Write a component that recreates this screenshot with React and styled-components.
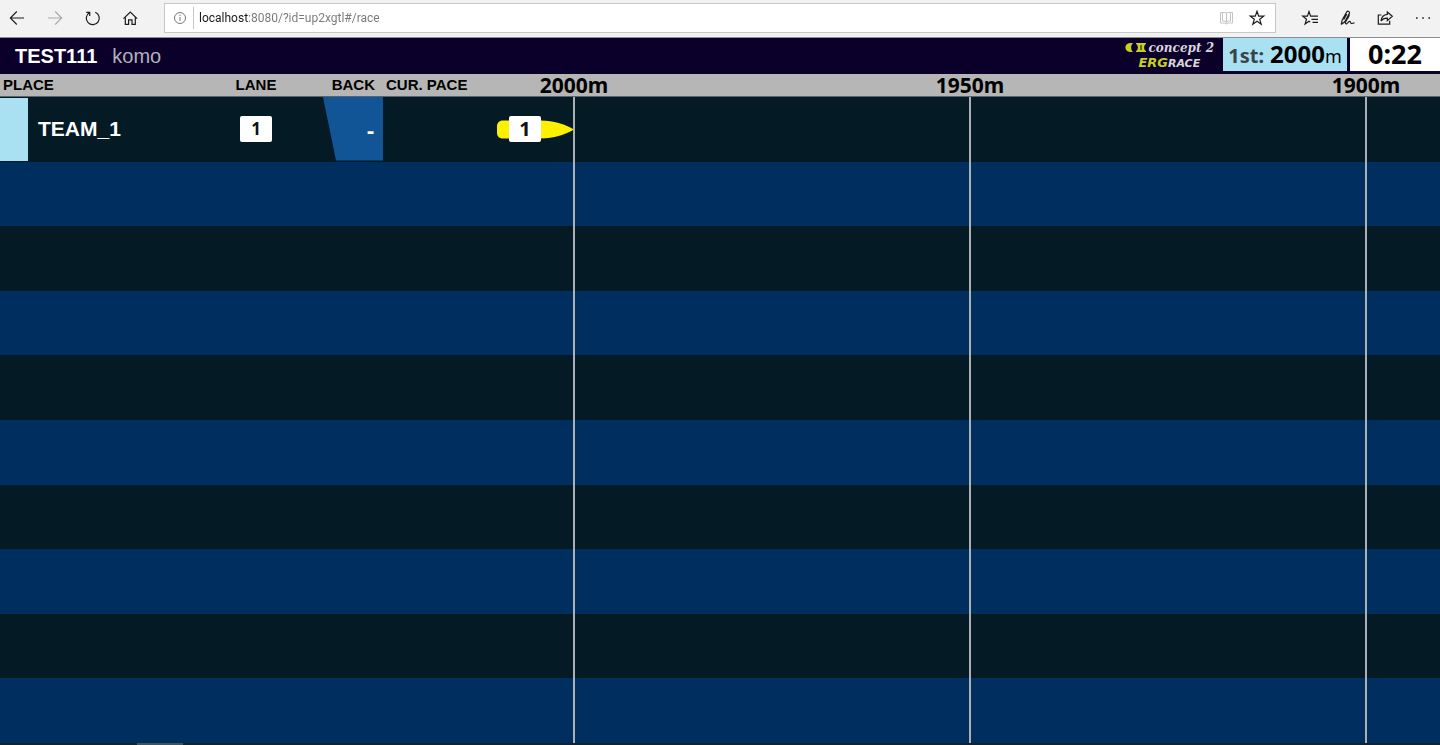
import styled, { createGlobalStyle } from 'styled-components';

const GlobalStyle = createGlobalStyle`
* {
    box-sizing: border-box;
}
body {
    margin: 0;
    background: #041b26;
    font-family: "Liberation Sans", Arial, sans-serif;
}
`

const Page = styled.div`
display: flex;
flex-direction: column;
height: 100vh;
overflow: hidden;
`

/* browser toolbar */

const Toolbar = styled.nav`
display: flex;
align-items: center;
gap: 24px;
height: 38px;
padding: 0 8px 2px;
background: #f2f2f2;
border-bottom: 1px solid #8f8c98;
`

const ToolGroup = styled.div`
display: flex;
gap: 20px;
`

const IconButton = styled.button`
display: flex;
align-items: center;
justify-content: center;
width: 18px;
height: 18px;
padding: 0;
border: 0;
background: none;
color: ${({ $color }) => $color || '#1c1c1c'};
`

const Address = styled.label`
flex: 1;
display: flex;
align-items: center;
height: 30px;
padding: 0 9px 0 6px;
background: #fff;
border: 1px solid #c8c8c8;
`

const Divider = styled.span`
width: 1px;
height: 22px;
margin: 0 5px 0 4px;
background: #c4c4c4;
`

const AddressInput = styled.input`
flex: 1;
min-width: 0;
height: 24px;
padding: 0;
border: 0;
outline: 0;
font-family: Roboto, "Noto Sans", sans-serif;
font-size: 12px;
color: transparent;
background: linear-gradient(90deg, #1a1a1a 49px, #777 49px);
-webkit-background-clip: text;
background-clip: text;
`

const AddressActions = styled.div`
display: flex;
gap: 12px;
`

/* race header */

const Header = styled.header`
display: flex;
height: 36px;
padding-bottom: 3px;
background: #0b0029;
`

const Titles = styled.div`
flex: 1;
display: flex;
align-items: center;
gap: 15px;
padding: 3px 0 0 15px;
`

const EventName = styled.h1`
margin: 0;
font-size: 20px;
font-weight: 700;
color: #fff;
`

const RaceName = styled.span`
font-size: 20px;
color: #b4b1bd;
`

const Logo = styled.div`
display: flex;
flex-direction: column;
justify-content: center;
align-items: center;
padding: 1px 9px 0 0;
`

const LogoLine = styled.div`
display: flex;
align-items: baseline;
gap: 2px;
height: 14px;
line-height: 14px;
`

const Concept = styled.span`
font: italic 700 12px/14px "DejaVu Serif", serif;
color: #d8d5df;
`

const Erg = styled.span`
font: italic 700 ${({ $small }) => ($small ? 11 : 13)}px/14px "DejaVu Sans", sans-serif;
color: ${({ $small }) => ($small ? '#d8d5df' : '#c6cf24')};
`

const Leader = styled.div`
display: flex;
align-items: baseline;
justify-content: center;
width: 124px;
margin-right: 3px;
background: #a9e1f3;
font-family: "Noto Sans", sans-serif;
font-weight: 700;
line-height: 31px;
color: #000;
`

const LeaderPlace = styled.span`
margin-right: 6px;
font-size: 20px;
color: #3a4448;
`

const LeaderDistance = styled.span`
font-size: 24px;
`

const Unit = styled.span`
font-size: 18px;
font-weight: 400;
`

const Clock = styled.time`
width: 90px;
background: #fff;
font-family: "Noto Sans", sans-serif;
font-size: 27px;
font-weight: 700;
line-height: 31px;
text-align: center;
color: #000;
`

/* board */

const Board = styled.main`
position: relative;
flex: 1;
display: flex;
min-height: 0;
`

const Table = styled.table`
flex: 1;
display: flex;
flex-direction: column;
`

const Head = styled.thead`
display: block;
height: 23px;
background: #b6b6b6;
border-bottom: 1px solid #56646b;
`

const Body = styled.tbody`
flex: 1;
display: grid;
grid-auto-rows: 1fr;
`

const Row = styled.tr`
display: grid;
grid-template-columns: 200px 112px 72px 100px 90px 1fr;
`

const Lane = styled(Row)`
background: #041b26;
&:nth-child(even) {
    background: #002f5f;
}
`

const HeadCell = styled.th`
padding: ${({ $pad }) => $pad || '0'};
font-size: 15px;
font-weight: 700;
line-height: 22px;
text-align: ${({ $align }) => $align || 'left'};
color: #000;
`

const Cell = styled.td`
display: flex;
align-items: center;
justify-content: ${({ $justify }) => $justify || 'flex-start'};
padding: 0;
`

const PlaceMark = styled.span`
align-self: stretch;
width: 28px;
margin: 1px 10px 1px 0;
background: #a9e1f3;
`

const TeamName = styled.span`
font-size: 21px;
font-weight: 700;
color: #fff;
`

const Badge = styled.span`
width: 32px;
height: 26px;
border-radius: 2px;
background: #fff;
font-family: "Noto Sans", sans-serif;
font-size: ${({ $size }) => $size}px;
font-weight: 700;
line-height: 26px;
text-align: center;
color: #111;
`

const Back = styled.span`
align-self: stretch;
display: flex;
align-items: center;
justify-content: flex-end;
width: 60px;
margin: 0 1px 1px 0;
padding-right: 9px;
background: #115596;
clip-path: polygon(0 0, 100% 0, 100% 100%, 13px 100%);
font-family: "Noto Sans", sans-serif;
font-size: 22px;
font-weight: 700;
color: #fff;
`

const Boat = styled.div`
position: relative;
display: flex;
`

const BoatNumber = styled(Badge)`
position: absolute;
left: 12px;
top: 50%;
transform: translateY(-50%);
`

const Markers = styled.div`
position: absolute;
inset: 0;
display: grid;
grid-template-columns: repeat(3, 396px);
padding-left: 376px;
pointer-events: none;
`

const Marker = styled.div`
display: flex;
flex-direction: column;
align-items: center;
font-family: "Noto Sans", sans-serif;
font-size: 21px;
font-weight: 700;
line-height: 23px;
color: #000;
&::after {
    content: "";
    flex: 1;
    width: 2px;
    background: #aab0b6;
}
`

const Footer = styled.footer`
height: 2px;
padding-left: 137px;
background: #16222b;
`

const FooterMark = styled.div`
width: 46px;
height: 2px;
background: #45525e;
`

function Icon({ children }) {
    return (
        <svg width="18" height="18" viewBox="0 0 18 18" fill="none" stroke="currentColor" strokeWidth="1.2" aria-hidden="true">
            {children}
        </svg>
    )
}

const lanes = [
    { name: 'TEAM_1', lane: 1, back: '-' },
    null, null, null, null, null, null, null, null, null,
]

const distances = ['2000m', '1950m', '1900m']

function BrowserBar() {
    return (
        <Toolbar>
            <ToolGroup>
                <IconButton aria-label="Back">
                    <Icon><path d="M16 9H2.500M8.800 2.500 2.300 9l6.500 6.500" strokeWidth="1.1" /></Icon>
                </IconButton>
                <IconButton aria-label="Forward" $color="#a8a8a8">
                    <Icon><path d="M2 9h13.500M9.200 2.500 15.700 9l-6.500 6.500" strokeWidth="1.1" /></Icon>
                </IconButton>
                <IconButton aria-label="Refresh">
                    <Icon><path d="M11.300 3.200A6.500 6.500 0 1 1 5.300 3.700M2.300 3.400h3.400v3.500" /></Icon>
                </IconButton>
                <IconButton aria-label="Home">
                    <Icon><path d="M1.500 9.600 8.300 3l6.800 6.600M3.300 8.200v7.200h3.300v-4.600H10v4.600h3.300V8.200" /></Icon>
                </IconButton>
            </ToolGroup>
            <Address>
                <IconButton as="span" $color="#777">
                    <Icon>
                        <circle cx="9" cy="9" r="5.500" strokeWidth="1" />
                        <path d="M9 8v4M9 5.800v1.200" strokeWidth="1" />
                    </Icon>
                </IconButton>
                <Divider />
                <AddressInput aria-label="Address" defaultValue="localhost:8080/?id=up2xgtl#/race" spellCheck={false} />
                <AddressActions>
                    <IconButton aria-label="Reading view" $color="#c4c4c4">
                        <Icon><path d="M8.500 3.500v11M2.500 3.500h4.500l1.500 1 1.500-1h4.500v10.500H10l-1.500 1-1.500-1H2.500zM4.500 3.500v8.500h2.500l1.500 1 1.500-1h2.500V3.500" strokeWidth="1" /></Icon>
                    </IconButton>
                    <IconButton aria-label="Add to favorites">
                        <Icon><path d="m9 2.300 1.700 4.900h5l-4 3.100 1.500 5L9 12.300l-4.200 3 1.500-5-4-3.100h5z" /></Icon>
                    </IconButton>
                </AddressActions>
            </Address>
            <ToolGroup>
                <IconButton aria-label="Favorites">
                    <Icon><path d="M12.200 7.200h-1.600L9 2.500 7.400 7.200H2.800l3.700 3-1.400 4.900L9 12.300l1.200.8M12 7.200h6M11.500 10.300H18M12.500 13.400H18" /></Icon>
                </IconButton>
                <IconButton aria-label="Notes">
                    <Icon><path d="m3.200 15.500 1-4.500 4.600-8.200c.8-1.300 3.300-.1 2.700 1.300L7 12.500l-3.800 3M8.800 5l-3 5.500M11.200 5.500c.6 1.500-2.500 5-3.700 7.500-.6 1.400.4 2.300 1.600 1.400 1-.8 1.900-2.300 2.900-1.900.9.400.3 1.700 1.300 2 .9.200 1.600-.5 3.200-.6" /></Icon>
                </IconButton>
                <IconButton aria-label="Share">
                    <Icon><path d="M5.500 6H2.300v9.200h11.400v-3.500M11.300 3l5 4.300-5 4.300V9.100C8.500 9 6.600 9.800 5 12c.5-4 2.700-6.300 6.300-6.600z" /></Icon>
                </IconButton>
                <IconButton aria-label="More">
                    <Icon><path d="M2 9h1.600M8.200 9h1.600M14.400 9H16" strokeWidth="1.600" /></Icon>
                </IconButton>
            </ToolGroup>
        </Toolbar>
    )
}

function RaceHeader() {
    return (
        <Header>
            <Titles>
                <EventName>TEST111</EventName>
                <RaceName>komo</RaceName>
            </Titles>
            <Logo>
                <LogoLine>
                    <svg width="22" height="9" viewBox="0 0 22 9" fill="#c6cf24" aria-hidden="true">
                        <path d="M5 0h3C5.500 2 5.500 7 8 9H5C-1.200 8.500-1.200.5 5 0zM11 0h10v1C18.500 2 18.500 7 21 8v1H11V8c2.500-1 2.500-6 0-7z" />
                        <path d="M16 2v5" stroke="#0b0029" strokeWidth="1" />
                    </svg>
                    <Concept>concept 2</Concept>
                </LogoLine>
                <LogoLine>
                    <span><Erg>ERG</Erg><Erg $small>RACE</Erg></span>
                </LogoLine>
            </Logo>
            <Leader>
                <LeaderPlace>1st:</LeaderPlace>
                <LeaderDistance>2000</LeaderDistance>
                <Unit>m</Unit>
            </Leader>
            <Clock>0:22</Clock>
        </Header>
    )
}

function LaneRow({ team }) {
    if (!team) {
        return <Lane><Cell /></Lane>
    }
    return (
        <Lane>
            <Cell>
                <PlaceMark />
                <TeamName>{team.name}</TeamName>
            </Cell>
            <Cell $justify="center"><Badge $size={17}>{team.lane}</Badge></Cell>
            <Cell $justify="flex-end"><Back>{team.back}</Back></Cell>
            <Cell />
            <Cell $justify="flex-end">
                <Boat>
                    <svg width="77" height="19" viewBox="0 0 77 19" fill="#fff000" aria-hidden="true">
                        <path d="M6 .5h38C57 .5 67 4 77 9.500 67 15 57 18.500 44 18.500H6C2 18.500 0 16 0 13V6C0 3 2 .5 6 .5z" />
                    </svg>
                    <BoatNumber $size={20}>{team.lane}</BoatNumber>
                </Boat>
            </Cell>
        </Lane>
    )
}

function App() {
    return (
        <Page>
            <GlobalStyle />
            <BrowserBar />
            <RaceHeader />
            <Board>
                <Table>
                    <Head>
                        <Row>
                            <HeadCell $pad="0 0 0 3px">PLACE</HeadCell>
                            <HeadCell $align="center">LANE</HeadCell>
                            <HeadCell $align="right" $pad="0 9px 0 0">BACK</HeadCell>
                            <HeadCell $pad="0 0 0 2px">CUR. PACE</HeadCell>
                        </Row>
                    </Head>
                    <Body>
                        {lanes.map((team, i) => <LaneRow key={i} team={team} />)}
                    </Body>
                </Table>
                <Markers>
                    {distances.map((d) => <Marker key={d}>{d}</Marker>)}
                </Markers>
            </Board>
            <Footer><FooterMark /></Footer>
        </Page>
    )
}

export default App
